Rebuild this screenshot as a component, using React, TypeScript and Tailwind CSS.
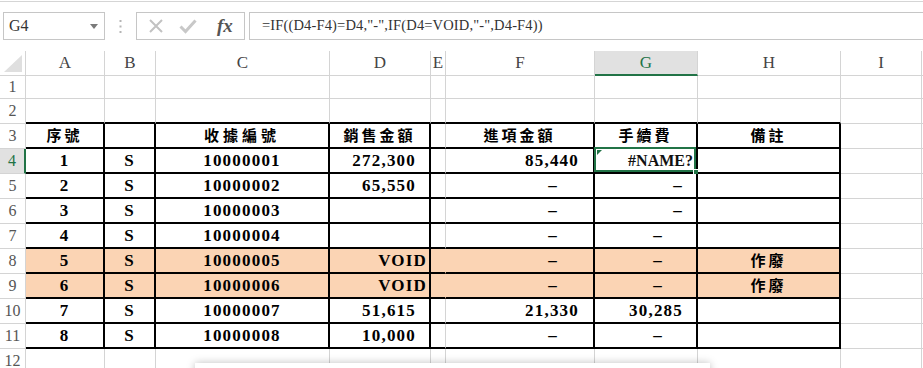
import React from "react";

const GREEN = "#217346";

type Col = { key: string; w: number; label?: string };

const cols: Col[] = [
  { key: "A", w: 79, label: "A" },
  { key: "B", w: 51, label: "B" },
  { key: "C", w: 174, label: "C" },
  { key: "D", w: 101, label: "D" },
  { key: "E", w: 15, label: "E" },
  { key: "F", w: 149, label: "F" },
  { key: "G", w: 103, label: "G" },
  { key: "H", w: 143, label: "H" },
  { key: "I", w: 81, label: "I" },
  { key: "J", w: 100 },
];

type CellVal = { t: string; align?: "c" | "r"; pr?: number };

// rows 4..11
const data: { cells: Record<string, CellVal>; fill?: boolean }[] = [
  {
    cells: {
      A: { t: "1" }, B: { t: "S" }, C: { t: "10000001" },
      D: { t: "272,300", align: "r", pr: 13 },
      F: { t: "85,440", align: "r", pr: 14 },
      G: { t: "#NAME?", align: "r", pr: 3 },
    },
  },
  {
    cells: {
      A: { t: "2" }, B: { t: "S" }, C: { t: "10000002" },
      D: { t: "65,550", align: "r", pr: 13 },
      F: { t: "–", align: "r", pr: 35 },
      G: { t: "–", align: "r", pr: 13 },
    },
  },
  {
    cells: {
      A: { t: "3" }, B: { t: "S" }, C: { t: "10000003" },
      F: { t: "–", align: "r", pr: 35 },
      G: { t: "–", align: "r", pr: 13 },
    },
  },
  {
    cells: {
      A: { t: "4" }, B: { t: "S" }, C: { t: "10000004" },
      F: { t: "–", align: "r", pr: 35 },
      G: { t: "–", align: "r", pr: 33 },
    },
  },
  {
    fill: true,
    cells: {
      A: { t: "5" }, B: { t: "S" }, C: { t: "10000005" },
      D: { t: "VOID", align: "r", pr: 2 },
      F: { t: "–", align: "r", pr: 35 },
      G: { t: "–", align: "r", pr: 33 },
      H: { t: "作廢" },
    },
  },
  {
    fill: true,
    cells: {
      A: { t: "6" }, B: { t: "S" }, C: { t: "10000006" },
      D: { t: "VOID", align: "r", pr: 2 },
      F: { t: "–", align: "r", pr: 35 },
      G: { t: "–", align: "r", pr: 33 },
      H: { t: "作廢" },
    },
  },
  {
    cells: {
      A: { t: "7" }, B: { t: "S" }, C: { t: "10000007" },
      D: { t: "51,615", align: "r", pr: 13 },
      F: { t: "21,330", align: "r", pr: 14 },
      G: { t: "30,285", align: "r", pr: 13 },
    },
  },
  {
    cells: {
      A: { t: "8" }, B: { t: "S" }, C: { t: "10000008" },
      D: { t: "10,000", align: "r", pr: 13 },
      F: { t: "–", align: "r", pr: 35 },
      G: { t: "–", align: "r", pr: 33 },
    },
  },
];

const headers: Record<string, string> = {
  A: "序號",
  C: "收據編號",
  D: "銷售金額",
  F: "進項金額",
  G: "手續費",
  H: "備註",
};

const tableCols = ["A", "B", "C", "D", "E", "F", "G", "H"];
const thickRight = ["A", "B", "C", "D", "F", "G", "H"];

function Cell({
  col,
  row,
  children,
  fill,
  className = "",
}: {
  col: Col;
  row: number;
  children?: React.ReactNode;
  fill?: boolean;
  className?: string;
}) {
  const inTable = tableCols.includes(col.key);
  const bottomThick = inTable && row >= 2 && row <= 11;
  const rightThick = thickRight.includes(col.key) && row >= 3 && row <= 11;
  const eFilled = col.key === "E" && fill;
  const cls = [
    "relative flex h-full shrink-0 items-center overflow-visible whitespace-nowrap",
    bottomThick ? "border-b-2 border-b-black" : "border-b border-b-[#d4d4d4]",
    rightThick
      ? "border-r-2 border-r-black"
      : eFilled
      ? "border-r border-r-[#fbd4b4]"
      : "border-r border-r-[#d4d4d4]",
    fill && inTable ? "bg-[#fbd4b4]" : "bg-white",
    className,
  ].join(" ");
  return (
    <div className={cls} style={{ width: col.w }}>
      {children}
    </div>
  );
}

function RowHead({ n, active }: { n: number; active?: boolean }) {
  return (
    <div
      className={
        "flex h-full w-[26px] shrink-0 items-center justify-center border-b border-b-[#d4d4d4] font-['Liberation_Serif',serif] text-[16px] " +
        (active
          ? "border-r-2 border-r-[#217346] bg-[#e1e1e1] text-[#217346]"
          : "border-r border-r-[#d4d4d4] bg-white text-[#555]")
      }
    >
      {n}
    </div>
  );
}

const dataFont =
  "font-['Liberation_Serif','Noto_Sans_CJK_TC',serif] font-bold text-[17px] tracking-[1.2px] text-black";
const errFont =
  "font-['Liberation_Serif',serif] font-bold text-[16px] text-[#111]";
const cjkFont =
  "font-['Noto_Sans_CJK_TC',sans-serif] font-bold text-[15px] tracking-[3px] text-black";

function FormulaBar() {
  return (
    <div className="h-[50px] w-full bg-white">
      <div className="mt-px h-px w-full bg-[#d5d5d5]" />
      <div className="mt-[10px] flex h-[28px] items-stretch">
        <div className="ml-[3px] flex w-[102px] items-center justify-between border border-[#c6c6c6] pl-[5px] pr-[6px]">
          <span className="font-['Liberation_Serif',serif] text-[16px] text-[#333]">G4</span>
          <svg width="8" height="5" viewBox="0 0 8 5">
            <polygon points="0,0 8,0 4,5" fill="#7a7a7a" />
          </svg>
        </div>
        <div className="flex w-[31px] items-center justify-center">
          <svg width="3" height="13" viewBox="0 0 3 13">
            <rect x="0.5" y="0" width="2" height="2" fill="#b5b5b5" />
            <rect x="0.5" y="5.5" width="2" height="2" fill="#b5b5b5" />
            <rect x="0.5" y="11" width="2" height="2" fill="#b5b5b5" />
          </svg>
        </div>
        <div className="flex w-[109px] items-center border border-[#c6c6c6]">
          <svg className="ml-[11px]" width="16" height="16" viewBox="0 0 16 16">
            <path d="M2 2 L14 14 M14 2 L2 14" stroke="#c2c2c2" strokeWidth="2" fill="none" />
          </svg>
          <svg className="ml-[15px]" width="18" height="16" viewBox="0 0 18 16">
            <path d="M1.5 8.5 L6.5 13.5 L16.5 2.5" stroke="#c8c8c8" strokeWidth="3" fill="none" />
          </svg>
          <span className="ml-[20px] font-['Liberation_Serif',serif] text-[19px] font-bold italic text-[#555]">
            fx
          </span>
        </div>
        <div className="ml-[4px] flex flex-1 items-center border-y border-l border-[#c6c6c6] pl-[12px]">
          <span className="font-['Liberation_Serif',serif] text-[14.5px] tracking-[0.15px] text-[#333]">
            =IF((D4-F4)=D4,"-",IF(D4=VOID,"-",D4-F4))
          </span>
        </div>
      </div>
    </div>
  );
}

function ColumnHeader() {
  return (
    <div className="flex h-[25px]">
      <div className="relative w-[26px] shrink-0 border-b border-r border-[#d4d4d4] bg-white">
        <svg className="absolute bottom-[3px] right-[3px]" width="18" height="17" viewBox="0 0 18 17">
          <polygon points="18,0 18,17 0,17" fill="#dfdfdf" />
        </svg>
      </div>
      {cols.map((c) => {
        const active = c.key === "G";
        return (
          <div
            key={c.key}
            className={
              "flex h-full shrink-0 items-center justify-center border-r border-r-[#d4d4d4] font-['Liberation_Serif',serif] text-[17px] " +
              (active
                ? "border-b-2 border-b-[#217346] bg-[#e1e1e1] text-[#217346]"
                : "border-b border-b-[#d4d4d4] bg-white text-[#444]")
            }
            style={{ width: c.w }}
          >
            {c.label}
          </div>
        );
      })}
    </div>
  );
}

export default function App() {
  return (
    <div className="relative h-[368px] w-[923px] overflow-hidden bg-white">
      <FormulaBar />
      <ColumnHeader />

      {/* rows 1, 2 */}
      {[1, 2].map((r) => (
        <div key={r} className={"flex " + (r === 1 ? "h-[23px]" : "h-[25px]")}>
          <RowHead n={r} />
          {cols.map((c) => (
            <Cell key={c.key} col={c} row={r} />
          ))}
        </div>
      ))}

      {/* row 3: table headers */}
      <div className="flex h-[25px]">
        <RowHead n={3} />
        {cols.map((c) => (
          <Cell key={c.key} col={c} row={3} className="justify-center">
            {headers[c.key] && (
              <span className={cjkFont + (c.key === "C" ? " text-[13px] tracking-[4px]" : "")}>
                {headers[c.key]}
              </span>
            )}
          </Cell>
        ))}
      </div>

      {/* rows 4..11 */}
      {data.map((d, i) => {
        const r = i + 4;
        return (
          <div key={r} className="flex h-[25px]">
            <RowHead n={r} active={r === 4} />
            {cols.map((c) => {
              const v = d.cells[c.key];
              const isCjk = c.key === "H";
              const isErr = r === 4 && c.key === "G";
              return (
                <Cell
                  key={c.key}
                  col={c}
                  row={r}
                  fill={d.fill}
                  className={v?.align === "r" ? "justify-end" : "justify-center"}
                >
                  {v && (
                    <span
                      className={isErr ? errFont : isCjk ? cjkFont : dataFont}
                      style={v.align === "r" ? { paddingRight: v.pr } : undefined}
                    >
                      {v.t}
                    </span>
                  )}
                  {isErr && (
                    <>
                      <div className="pointer-events-none absolute -left-[1px] -top-[2px] bottom-0 right-0 border-2 border-[#217346]" />
                      <svg className="absolute left-[2px] top-[1px]" width="5" height="5" viewBox="0 0 5 5">
                        <polygon points="0,0 5,0 0,5" fill={GREEN} />
                      </svg>
                      <div className="absolute -bottom-[3px] -right-[3px] h-[6px] w-[6px] border border-white bg-[#217346]" />
                    </>
                  )}
                </Cell>
              );
            })}
          </div>
        );
      })}

      {/* row 12 */}
      <div className="flex h-[25px]">
        <RowHead n={12} />
        {cols.map((c) => (
          <Cell key={c.key} col={c} row={12} />
        ))}
      </div>

      {/* popup edge at the bottom */}
      <div className="absolute left-[195px] top-[363px] h-[30px] w-[515px] bg-white shadow-[0_0_8px_rgba(0,0,0,0.25)]" />
    </div>
  );
}
